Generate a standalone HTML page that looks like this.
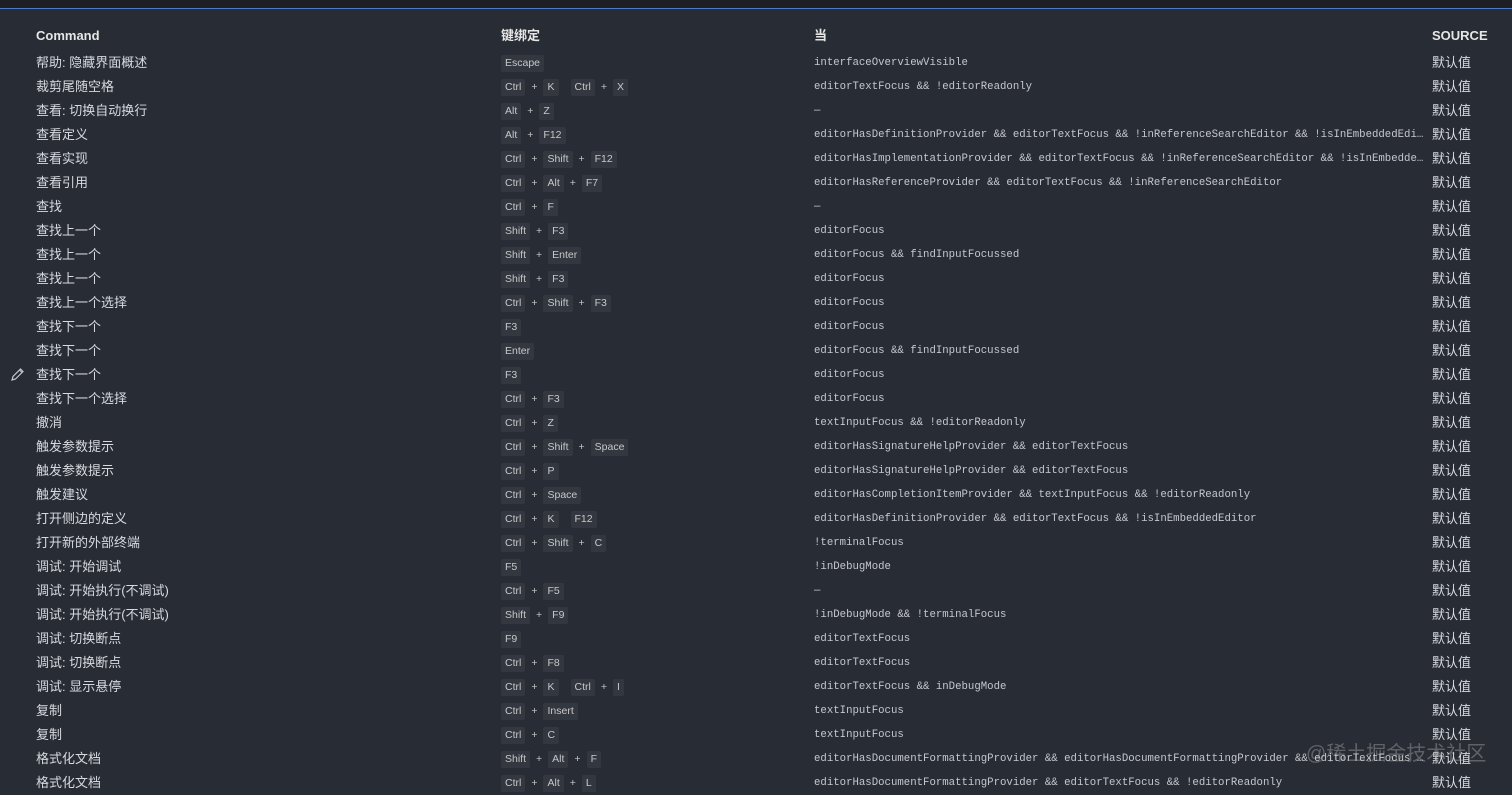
<!DOCTYPE html>
<html><head><meta charset="utf-8"><style>
*{margin:0;padding:0;box-sizing:border-box}
body{width:1512px;height:783px;overflow:hidden;background:#282c34;color:#d7dae0;font-family:"Liberation Sans","Noto Sans CJK SC",sans-serif;position:relative}
.top{position:absolute;left:0;top:0;width:1512px;height:9px;background:#1d1f25;border-bottom:1px solid #4d78cc}
.hd{position:absolute;top:24px;left:0;width:1512px;height:24px;font-weight:bold;font-size:13px;color:#e6e6e6}
.rows{position:absolute;top:51px;left:0;width:1512px}
.r{height:24px;position:relative;font-size:13px;line-height:24px}
.c,.k,.w,.s{position:absolute;top:0;white-space:nowrap}
.c{left:36px}
.k{left:501px;font-size:10.5px;color:#c8c8c8;display:flex;align-items:center;height:24px}
.k b{font-weight:normal;background:#33373f;border-radius:2px;padding:0 4px;height:17px;line-height:17px;display:inline-block}
.k i{font-style:normal;margin:0 6px}
.k u{display:inline-block;width:12px}
.w{left:814px;font-family:"Liberation Mono","DejaVu Sans Mono",monospace;font-size:10.7px;color:#c5c8ce;width:612px;overflow:hidden;text-overflow:ellipsis}
.s{left:1432px;font-size:13px}
.hd span{position:absolute;top:0;line-height:24px}
.wm{position:absolute;left:1306px;top:737px;font-size:20px;color:rgba(200,200,200,.35)}
</style></head><body>
<div class="top"></div>
<div class="hd"><span style="left:36px">Command</span><span style="left:501px">键绑定</span><span style="left:814px">当</span><span style="left:1432px">SOURCE</span></div>
<svg style="position:absolute;left:10px;top:367px" width="15" height="15" viewBox="0 0 15 15"><path d="M2 13 L3 9.5 L10.5 2 L13 4.5 L5.5 12 Z M9.5 3 L12 5.5" fill="none" stroke="#c5c8ce" stroke-width="1.2"/></svg>
<div class="rows">
<div class="r"><span class="c">帮助: 隐藏界面概述</span><span class="k"><b>Escape</b></span><span class="w">interfaceOverviewVisible</span><span class="s">默认值</span></div>
<div class="r"><span class="c">裁剪尾随空格</span><span class="k"><b>Ctrl</b><i>+</i><b>K</b><u></u><b>Ctrl</b><i>+</i><b>X</b></span><span class="w">editorTextFocus &amp;&amp; !editorReadonly</span><span class="s">默认值</span></div>
<div class="r"><span class="c">查看: 切换自动换行</span><span class="k"><b>Alt</b><i>+</i><b>Z</b></span><span class="w">—</span><span class="s">默认值</span></div>
<div class="r"><span class="c">查看定义</span><span class="k"><b>Alt</b><i>+</i><b>F12</b></span><span class="w">editorHasDefinitionProvider &amp;&amp; editorTextFocus &amp;&amp; !inReferenceSearchEditor &amp;&amp; !isInEmbeddedEditor</span><span class="s">默认值</span></div>
<div class="r"><span class="c">查看实现</span><span class="k"><b>Ctrl</b><i>+</i><b>Shift</b><i>+</i><b>F12</b></span><span class="w">editorHasImplementationProvider &amp;&amp; editorTextFocus &amp;&amp; !inReferenceSearchEditor &amp;&amp; !isInEmbeddedEditor</span><span class="s">默认值</span></div>
<div class="r"><span class="c">查看引用</span><span class="k"><b>Ctrl</b><i>+</i><b>Alt</b><i>+</i><b>F7</b></span><span class="w">editorHasReferenceProvider &amp;&amp; editorTextFocus &amp;&amp; !inReferenceSearchEditor</span><span class="s">默认值</span></div>
<div class="r"><span class="c">查找</span><span class="k"><b>Ctrl</b><i>+</i><b>F</b></span><span class="w">—</span><span class="s">默认值</span></div>
<div class="r"><span class="c">查找上一个</span><span class="k"><b>Shift</b><i>+</i><b>F3</b></span><span class="w">editorFocus</span><span class="s">默认值</span></div>
<div class="r"><span class="c">查找上一个</span><span class="k"><b>Shift</b><i>+</i><b>Enter</b></span><span class="w">editorFocus &amp;&amp; findInputFocussed</span><span class="s">默认值</span></div>
<div class="r"><span class="c">查找上一个</span><span class="k"><b>Shift</b><i>+</i><b>F3</b></span><span class="w">editorFocus</span><span class="s">默认值</span></div>
<div class="r"><span class="c">查找上一个选择</span><span class="k"><b>Ctrl</b><i>+</i><b>Shift</b><i>+</i><b>F3</b></span><span class="w">editorFocus</span><span class="s">默认值</span></div>
<div class="r"><span class="c">查找下一个</span><span class="k"><b>F3</b></span><span class="w">editorFocus</span><span class="s">默认值</span></div>
<div class="r"><span class="c">查找下一个</span><span class="k"><b>Enter</b></span><span class="w">editorFocus &amp;&amp; findInputFocussed</span><span class="s">默认值</span></div>
<div class="r"><span class="c">查找下一个</span><span class="k"><b>F3</b></span><span class="w">editorFocus</span><span class="s">默认值</span></div>
<div class="r"><span class="c">查找下一个选择</span><span class="k"><b>Ctrl</b><i>+</i><b>F3</b></span><span class="w">editorFocus</span><span class="s">默认值</span></div>
<div class="r"><span class="c">撤消</span><span class="k"><b>Ctrl</b><i>+</i><b>Z</b></span><span class="w">textInputFocus &amp;&amp; !editorReadonly</span><span class="s">默认值</span></div>
<div class="r"><span class="c">触发参数提示</span><span class="k"><b>Ctrl</b><i>+</i><b>Shift</b><i>+</i><b>Space</b></span><span class="w">editorHasSignatureHelpProvider &amp;&amp; editorTextFocus</span><span class="s">默认值</span></div>
<div class="r"><span class="c">触发参数提示</span><span class="k"><b>Ctrl</b><i>+</i><b>P</b></span><span class="w">editorHasSignatureHelpProvider &amp;&amp; editorTextFocus</span><span class="s">默认值</span></div>
<div class="r"><span class="c">触发建议</span><span class="k"><b>Ctrl</b><i>+</i><b>Space</b></span><span class="w">editorHasCompletionItemProvider &amp;&amp; textInputFocus &amp;&amp; !editorReadonly</span><span class="s">默认值</span></div>
<div class="r"><span class="c">打开侧边的定义</span><span class="k"><b>Ctrl</b><i>+</i><b>K</b><u></u><b>F12</b></span><span class="w">editorHasDefinitionProvider &amp;&amp; editorTextFocus &amp;&amp; !isInEmbeddedEditor</span><span class="s">默认值</span></div>
<div class="r"><span class="c">打开新的外部终端</span><span class="k"><b>Ctrl</b><i>+</i><b>Shift</b><i>+</i><b>C</b></span><span class="w">!terminalFocus</span><span class="s">默认值</span></div>
<div class="r"><span class="c">调试: 开始调试</span><span class="k"><b>F5</b></span><span class="w">!inDebugMode</span><span class="s">默认值</span></div>
<div class="r"><span class="c">调试: 开始执行(不调试)</span><span class="k"><b>Ctrl</b><i>+</i><b>F5</b></span><span class="w">—</span><span class="s">默认值</span></div>
<div class="r"><span class="c">调试: 开始执行(不调试)</span><span class="k"><b>Shift</b><i>+</i><b>F9</b></span><span class="w">!inDebugMode &amp;&amp; !terminalFocus</span><span class="s">默认值</span></div>
<div class="r"><span class="c">调试: 切换断点</span><span class="k"><b>F9</b></span><span class="w">editorTextFocus</span><span class="s">默认值</span></div>
<div class="r"><span class="c">调试: 切换断点</span><span class="k"><b>Ctrl</b><i>+</i><b>F8</b></span><span class="w">editorTextFocus</span><span class="s">默认值</span></div>
<div class="r"><span class="c">调试: 显示悬停</span><span class="k"><b>Ctrl</b><i>+</i><b>K</b><u></u><b>Ctrl</b><i>+</i><b>I</b></span><span class="w">editorTextFocus &amp;&amp; inDebugMode</span><span class="s">默认值</span></div>
<div class="r"><span class="c">复制</span><span class="k"><b>Ctrl</b><i>+</i><b>Insert</b></span><span class="w">textInputFocus</span><span class="s">默认值</span></div>
<div class="r"><span class="c">复制</span><span class="k"><b>Ctrl</b><i>+</i><b>C</b></span><span class="w">textInputFocus</span><span class="s">默认值</span></div>
<div class="r"><span class="c">格式化文档</span><span class="k"><b>Shift</b><i>+</i><b>Alt</b><i>+</i><b>F</b></span><span class="w">editorHasDocumentFormattingProvider &amp;&amp; editorHasDocumentFormattingProvider &amp;&amp; editorTextFocus &amp;&amp; !editorReadonly</span><span class="s">默认值</span></div>
<div class="r"><span class="c">格式化文档</span><span class="k"><b>Ctrl</b><i>+</i><b>Alt</b><i>+</i><b>L</b></span><span class="w">editorHasDocumentFormattingProvider &amp;&amp; editorTextFocus &amp;&amp; !editorReadonly</span><span class="s">默认值</span></div>
</div>
<div class="wm">@稀土掘金技术社区</div>
</body></html>
